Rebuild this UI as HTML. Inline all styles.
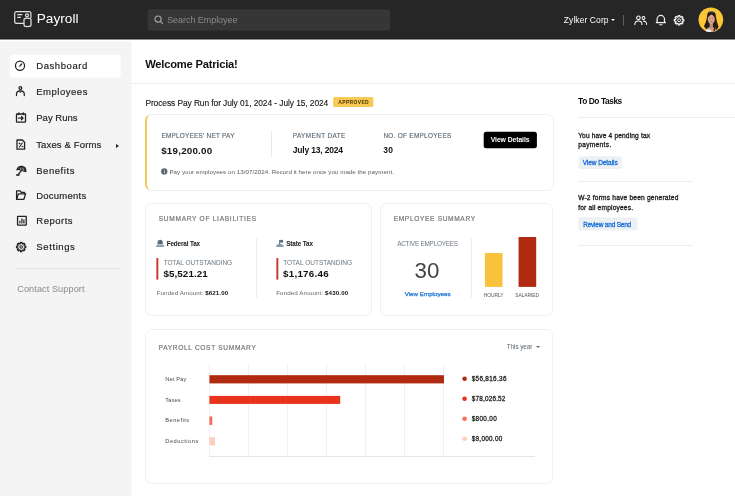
<!DOCTYPE html>
<html><head><meta charset="utf-8"><style>
*{box-sizing:border-box;margin:0;padding:0}
html,body{width:735px;height:496px;overflow:hidden;background:#fff;font-family:"Liberation Sans",sans-serif;color:#111}
.abs{position:absolute}
#top{position:absolute;left:0;top:0;width:735px;height:40px;background:linear-gradient(#262626 0,#262626 38px,#222 38px,#222 39px,#8e8e8e 39px,#8e8e8e 40px)}
#side{position:absolute;left:0;top:41px;width:132px;height:455px;background:linear-gradient(90deg,#f4f4f4 0,#f4f4f4 131px,#f9f9f9 131px);border-top:1px solid #f8f8f8}
.t{position:absolute;white-space:nowrap;line-height:1}
.card{position:absolute;border:1px solid #eff0f1;border-radius:6.5px;background:transparent}
.ln{position:absolute;background:#ececec}
</style></head><body>
<div id="top"></div>
<div id="side"></div>
<svg class="abs" style="left:0;top:0" width="735" height="496" viewBox="0 0 735 496"><rect x="209.0" y="363.4" width="1" height="92.6" fill="#f1f1f3"/><rect x="248.0" y="363.4" width="1" height="92.6" fill="#f1f1f3"/><rect x="287.0" y="363.4" width="1" height="92.6" fill="#f1f1f3"/><rect x="326.0" y="363.4" width="1" height="92.6" fill="#f1f1f3"/><rect x="365.0" y="363.4" width="1" height="92.6" fill="#f1f1f3"/><rect x="404.0" y="363.4" width="1" height="92.6" fill="#f1f1f3"/><rect x="443.0" y="363.4" width="1" height="92.6" fill="#f1f1f3"/><rect x="147.8" y="9.2" width="242.6" height="21.2" fill="#363636" rx="3"/><rect x="623" y="15" width="1" height="10.5" fill="#5e5e5e"/><rect x="9.7" y="54.8" width="111.1" height="22.6" fill="#fff" rx="3"/><rect x="16" y="268.2" width="104.6" height="1" fill="#e1e6e8"/><rect x="333.2" y="96.9" width="40.1" height="10.2" fill="#f9c955" rx="1.5"/><rect x="483.7" y="131.7" width="53.2" height="16.6" fill="#000" rx="2.5"/><rect x="156.4" y="258" width="1.9" height="21.6" fill="#c5382a"/><rect x="276.4" y="258" width="1.9" height="21.6" fill="#c5382a"/><rect x="484.9" y="253" width="17.6" height="33.9" fill="#f9c23c"/><rect x="518.55" y="237" width="17.65" height="49.9" fill="#b02a12"/><rect x="209.4" y="375.2" width="234.6" height="8.2" fill="#b02a12"/><rect x="209.4" y="395.9" width="130.8" height="8" fill="#e8341c"/><rect x="209.4" y="416.4" width="2.9" height="8.5" fill="#fb6b5a"/><rect x="209.4" y="437.2" width="5.7" height="8.2" fill="#fdcfbb"/><rect x="578.4" y="156.2" width="43.9" height="12.7" fill="#eef1f4" rx="2"/><rect x="578.4" y="217.3" width="59" height="13.1" fill="#eef1f4" rx="2"/><circle cx="464.6" cy="378.8" r="2.3" fill="#b02a12"/><circle cx="464.6" cy="398.8" r="2.3" fill="#e8341c"/><circle cx="464.6" cy="418.8" r="2.3" fill="#fb6b5a"/><circle cx="464.6" cy="438.8" r="2.3" fill="#fccdb8"/></svg>

<!-- top bar -->
<svg class="abs" style="left:13.400px;top:10px" width="20" height="18" viewBox="0 0 20 18" fill="none" stroke="#e4e4e4" stroke-width="1.200" stroke-linecap="round" stroke-linejoin="round">
  <path d="M10.4 13.4H3.4a1.7 1.7 0 0 1-1.7-1.700V3.400a1.700 1.700 0 0 1 1.700-1.700h12.800a1.700 1.700 0 0 1 1.700 1.700v4"/>
  <path d="M4.800 4.700h4M4.800 7.300h2.600"/>
  <circle cx="14" cy="5.300" r="1.500"/>
  <path d="M11 9.600c0-1 1.200-1.500 3.400-1.500s3.600.5 3.600 1.500v5.400c0 1-1.400 1.600-3.500 1.600s-3.500-.6-3.500-1.600z"/>
</svg>
<svg class="abs" style="left:153.900px;top:14.700px" width="9.400" height="9.400" viewBox="0 0 10 10" fill="none" stroke="#ababab" stroke-width="1.200" stroke-linecap="round"><circle cx="4.300" cy="4.300" r="3.300"/><path d="M6.800 6.800L9 9"/></svg>
<div class="abs" style="left:610.700px;top:19.200px;width:0;height:0;border-left:2px solid transparent;border-right:2px solid transparent;border-top:2.500px solid #fff"></div>
<svg class="abs" style="left:633.600px;top:14.600px" width="13.400" height="10.800" viewBox="0 0 14 11" fill="none" stroke="#fff" stroke-width="1.100" stroke-linecap="round" stroke-linejoin="round">
  <circle cx="4.600" cy="2.800" r="1.900"/><path d="M.8 10.200c0-2.500 1.500-4 3.800-4s3.800 1.500 3.800 4"/>
  <circle cx="9.900" cy="3" r="1.500"/><path d="M9.700 6.300c2.200-.3 3.600 1.300 3.600 3.900"/>
</svg>
<svg class="abs" style="left:654px;top:13px" width="14" height="14" viewBox="654 13 14 14" fill="none" stroke="#f2f2f2" stroke-width="1.250" stroke-linecap="round" stroke-linejoin="round"><path d="M657.100 22.400v-3.200a3.700 3.700 0 0 1 7.400 0v3.200"/><path d="M656.300 22.600h9.200" stroke-width="1.250"/><path d="M659.600 24.700h2.400" stroke-width="1.100"/></svg>
<svg class="abs" style="left:672px;top:13px" width="15" height="15" viewBox="672 13 15 15" fill="none" stroke="#f2f2f2" stroke-linejoin="round"><path d="M678.19 16.80L678.27 15.56L679.83 15.56L679.91 16.80L680.88 17.21L681.81 16.39L682.91 17.49L682.09 18.42L682.50 19.39L683.74 19.47L683.74 21.03L682.50 21.11L682.09 22.08L682.91 23.01L681.81 24.11L680.88 23.29L679.91 23.70L679.83 24.94L678.27 24.94L678.19 23.70L677.22 23.29L676.29 24.11L675.19 23.01L676.01 22.08L675.60 21.11L674.36 21.03L674.36 19.47L675.60 19.39L676.01 18.42L675.19 17.49L676.29 16.39L677.22 17.21z" stroke-width="1.250"/><circle cx="679.05" cy="20.25" r="1.450" stroke-width=".95"/></svg>
<svg class="abs" style="left:698px;top:6px" width="27" height="28" viewBox="698 6 27 28">
  <defs><clipPath id="avc"><circle cx="710.85" cy="19.75" r="12.35"/></clipPath></defs>
  <circle cx="710.85" cy="19.75" r="12.35" fill="#fbc533"/>
  <g clip-path="url(#avc)">
    <path d="M707.200 15.300c.2-2.800 1.900-4.200 4.200-4.200s4.100 1.400 4.400 4.200c.3 3 .8 5.200 1.500 7.500.4 1.400.8 2.600 1.300 4l-2.500 4.500-3 2h-4l-4-5.500-1.200-1.500c.8-1.600 1.500-3 2-4.600.700-2.200 1.100-4.000 1.300-6.400z" fill="#2a1b18"/>
    <path d="M705.500 33c0-3.600 1.600-5.400 3.600-5.800l4.400-.2c2.200.5 3.600 2.400 3.800 6z" fill="#cf9d84"/>
    <path d="M704.600 33c.2-2.400 1.300-3.500 3-3.700 1.400.5 2.600.6 3.700.2l-.3 3.500z" fill="#e9e9ec"/>
    <path d="M709.600 22.500h3.300v5c-.6.900-2.700.9-3.300 0z" fill="#c08d73"/>
    <ellipse cx="711.250" cy="19.100" rx="3.550" ry="4.900" fill="#d6a68c"/>
    <path d="M707.600 17.500c.2-3 1.600-4.500 3.700-4.500s3.400 1.500 3.600 4.500c-1-1.500-2-2.300-3.300-3.300-1.400 1-2.800 1.800-4 3.300z" fill="#2a1b18"/>
    <path d="M714.300 22c.9 2 1.300 4.500 1.100 7.500l-1.900 3c.5-3 .3-5.800-.2-8z" fill="#2a1b18"/>
    <path d="M708.800 12.300c.8-.9 4.400-.9 5.400 0" stroke="#8595a0" stroke-width="1" fill="none"/>
    <path d="M709.200 18.200h1.400M712 18.200h1.400" stroke="#6b4a3c" stroke-width=".5"/>
    <path d="M710.300 21.700h2" stroke="#a85548" stroke-width=".6"/>
  </g>
</svg>
<!-- sidebar -->
<svg class="abs" style="left:13px;top:59px" width="14" height="14" viewBox="13 59 14 14" fill="none" stroke="#222" stroke-width="1.25" stroke-linecap="round" stroke-linejoin="round"><circle cx="20" cy="65.75" r="4.55"/><path d="M19.7 66.1L21.7 64" stroke-width="1.35"/></svg>
<svg class="abs" style="left:13px;top:85px" width="14" height="13" viewBox="13 85 14 13" fill="none" stroke="#222" stroke-width="1.25" stroke-linecap="round" stroke-linejoin="round"><circle cx="20.4" cy="88.1" r="1.4"/><path d="M16.5 95.6v-1.3c0-2.2 1.500-3.400 3.900-3.400s3.900 1.200 3.900 3.400v1.300"/><path d="M19.500 91.300l.9 1.300.9-1.300" stroke-width=".9"/></svg>
<svg class="abs" style="left:14px;top:111px" width="14" height="13" viewBox="14 111 14 13" fill="none" stroke="#222" stroke-width="1.3" stroke-linecap="round" stroke-linejoin="round"><rect x="16.500" y="114" width="9" height="8.200" rx=".5"/><path d="M18.900 112.900v1.600M23.300 112.900v1.600" stroke-width="1.400"/><path d="M18.600 118.100h4.300M21.500 116.500l1.600 1.600-1.600 1.600" stroke-width="1.300"/></svg>
<svg class="abs" style="left:14px;top:138px" width="14" height="13" viewBox="14 138 14 13" fill="none" stroke="#222" stroke-width="1.3" stroke-linecap="round" stroke-linejoin="round"><path d="M17 140h5.400l2.200 2.200v7H17z"/><path d="M19.300 147l3-4" stroke-width="1.100"/><circle cx="19.400" cy="143.400" r=".55" fill="#222" stroke-width=".5"/><circle cx="22.300" cy="146.500" r=".55" fill="#222" stroke-width=".5"/></svg>
<svg class="abs" style="left:14px;top:164px" width="14" height="13" viewBox="14 164 14 13" fill="none" stroke="#222" stroke-linecap="round" stroke-linejoin="round"><path d="M17 169.900c.2-2.300 2.300-3.900 4.900-3.500 2.600.4 4.200 2.600 3.900 5.300-.6-.7-1.500-.8-2.200-.3-.4-.8-1.300-1.200-2.200-.9-.5-.8-1.400-1.100-2.200-.8-.600-.400-1.500-.400-2.200.200z" stroke-width="1.200" fill="#3a3a3a"/><path d="M20.100 168l1.100 2.500M22.900 168.200l.5 3.100" stroke="#eee" stroke-width=".55"/><path d="M21.300 170.600l-3.300 4.300" stroke-width="1.350"/><path d="M16.500 175h2.600" stroke-width="1.300"/></svg>
<svg class="abs" style="left:14px;top:188px" width="14" height="13" viewBox="14 188 14 13" fill="none" stroke="#222" stroke-width="1.3" stroke-linecap="round" stroke-linejoin="round"><path d="M16.600 199.300v-8.400h3.600l1 1.500h3.300v1.300"/><path d="M16.600 199.300l1.800-5.400h7.200l-1.700 5.400z"/></svg>
<svg class="abs" style="left:15px;top:214px" width="14" height="13" viewBox="15 214 14 13" fill="none" stroke="#222" stroke-width="1.3" stroke-linecap="round" stroke-linejoin="round"><rect x="17.550" y="216.350" width="8.700" height="8.700" rx=".4"/><path d="M19.900 223v-1.800M21.900 223v-4.200M23.900 223v-3.200" stroke-width="1.200"/></svg>
<svg class="abs" style="left:14px;top:240px" width="15" height="15" viewBox="14 240 15 15" fill="none" stroke="#222" stroke-linejoin="round"><path d="M20.32 243.60L20.39 242.36L21.91 242.36L21.98 243.60L22.93 243.99L23.85 243.17L24.93 244.25L24.11 245.17L24.50 246.12L25.74 246.19L25.74 247.71L24.50 247.78L24.11 248.73L24.93 249.65L23.85 250.73L22.93 249.91L21.98 250.30L21.91 251.54L20.39 251.54L20.32 250.30L19.37 249.91L18.45 250.73L17.37 249.65L18.19 248.73L17.80 247.78L16.56 247.71L16.56 246.19L17.80 246.12L18.19 245.17L17.37 244.25L18.45 243.17L19.37 243.99z" stroke-width="1.300"/><circle cx="21.15" cy="246.95" r="1.300" stroke-width="1.050"/></svg>
<div class="abs" style="left:115.600px;top:143.500px;width:0;height:0;border-top:2px solid transparent;border-bottom:2px solid transparent;border-left:3.400px solid #222"></div>

<!-- main -->
<div class="ln" style="left:131.700px;top:82.800px;width:604px;height:1px;background:#ededed"></div>

<div class="card" style="left:145px;top:114px;width:408.500px;height:77px;border-left:2.200px solid #f5c95a"></div>
<div class="ln" style="left:271px;top:130.600px;width:1px;height:26.800px;background:#e8e8e8"></div>
<svg class="abs" style="left:160px;top:167px" width="9" height="9" viewBox="160 167 9 9"><circle cx="164.250" cy="171.450" r="3.150" fill="#5a6673"/><rect x="163.900" y="169.700" width=".7" height=".8" fill="#fff"/><rect x="163.900" y="171" width=".7" height="2.100" fill="#fff"/></svg>

<div class="card" style="left:145px;top:203px;width:227px;height:112.500px"></div>
<div class="ln" style="left:256px;top:238px;width:1px;height:59.500px"></div>
<!-- federal icon -->
<svg class="abs" style="left:155px;top:239px" width="11" height="9" viewBox="155 239 11 9"><path d="M157.500 244.300v-1.700a2.650 2.900 0 0 1 5.300 0v1.700z" fill="#56697a"/><path d="M158.600 242.600a1.600 1.800 0 0 1 1.400-1.700" stroke="#8397a8" stroke-width=".6" fill="none"/><rect x="157.200" y="244.300" width="5.900" height=".9" fill="#a9b8c4"/><rect x="156.100" y="245.300" width="8" height="1.500" fill="#6f899c"/></svg>
<!-- state icon -->
<svg class="abs" style="left:275px;top:239px" width="11" height="9" viewBox="275 239 11 9"><path d="M276.400 246.800c0-1.900 1.300-3.100 3.500-3.100s3.500 1.200 3.500 3.100z" fill="#8fa4b4"/><rect x="276.300" y="245.700" width="7.200" height="1.100" fill="#7b93a5"/><rect x="279.200" y="239.900" width=".9" height="4.600" fill="#56697a"/><path d="M279.600 239.900h3.500v2.700h-3.500z" fill="#5d7183"/></svg>

<div class="card" style="left:379.500px;top:203px;width:173.500px;height:112.500px"></div>
<div class="ln" style="left:471px;top:238px;width:1px;height:59.500px"></div>

<div class="card" style="left:145px;top:329px;width:408px;height:155px"></div>
<div class="abs" style="left:535.800px;top:345.800px;width:0;height:0;border-left:2.100px solid transparent;border-right:2.100px solid transparent;border-top:2.400px solid #5a6673"></div>

<div class="ln" style="left:209px;top:455.500px;width:326.300px;height:1px;background:#e6e6e6"></div>

<!-- todo -->
<div class="ln" style="left:578px;top:116.700px;width:157px;height:1px;background:#ededed"></div>
<div class="ln" style="left:578px;top:180.900px;width:115px;height:1px;background:#ededed"></div>
<div class="ln" style="left:578px;top:244.700px;width:115px;height:1px;background:#ededed"></div>

<div id="txt" style="position:absolute;left:0;top:0;width:735px;height:496px;will-change:transform"><div class="t" style="left:36.72px;top:12px;font-size:13.6px;font-weight:normal;color:#fff;letter-spacing:0.032px">Payroll</div>
<div class="t" style="left:167.15px;top:16px;font-size:9px;font-weight:normal;color:#8a8a8a;letter-spacing:-0.051px">Search Employee</div>
<div class="t" style="left:563.78px;top:16px;font-size:8.5px;font-weight:normal;color:#fff;letter-spacing:0.086px">Zylker Corp</div>
<div class="t" style="left:36.23px;top:61px;font-size:9.5px;font-weight:normal;color:#222;letter-spacing:0.585px;-webkit-text-stroke:.17px #222">Dashboard</div>
<div class="t" style="left:36.23px;top:87px;font-size:9.5px;font-weight:normal;color:#222;letter-spacing:0.521px;-webkit-text-stroke:.17px #222">Employees</div>
<div class="t" style="left:36.23px;top:113px;font-size:9.5px;font-weight:normal;color:#222;letter-spacing:0.025px;-webkit-text-stroke:.17px #222">Pay Runs</div>
<div class="t" style="left:36.23px;top:140px;font-size:9.5px;font-weight:normal;color:#222;letter-spacing:0.142px;-webkit-text-stroke:.17px #222">Taxes &amp; Forms</div>
<div class="t" style="left:36.23px;top:166px;font-size:9.5px;font-weight:normal;color:#222;letter-spacing:0.548px;-webkit-text-stroke:.17px #222">Benefits</div>
<div class="t" style="left:36.23px;top:191px;font-size:9.5px;font-weight:normal;color:#222;letter-spacing:0.238px;-webkit-text-stroke:.17px #222">Documents</div>
<div class="t" style="left:36.32px;top:216px;font-size:9.5px;font-weight:normal;color:#222;letter-spacing:0.500px;-webkit-text-stroke:.17px #222">Reports</div>
<div class="t" style="left:36.32px;top:242px;font-size:9.5px;font-weight:normal;color:#222;letter-spacing:0.605px;-webkit-text-stroke:.17px #222">Settings</div>
<div class="t" style="left:17.24px;top:285px;font-size:9.2px;font-weight:normal;color:#8a8a8a;letter-spacing:0.060px">Contact Support</div>
<div class="t" style="left:145.24px;top:59px;font-size:11.2px;font-weight:bold;color:#111;letter-spacing:-0.224px">Welcome Patricia!</div>
<div class="t" style="left:145.38px;top:99px;font-size:8.4px;font-weight:normal;color:#111;letter-spacing:-0.069px;-webkit-text-stroke:.1px #111">Process Pay Run for July 01, 2024 - July 15, 2024</div>
<div class="t" style="left:338.35px;top:100px;font-size:5px;font-weight:bold;color:#4a3800;letter-spacing:0.327px">APPROVED</div>
<div class="t" style="left:161.38px;top:133px;font-size:6.4px;font-weight:normal;color:#5f6b76;letter-spacing:0.256px;-webkit-text-stroke:.15px #5f6b76">EMPLOYEES' NET PAY</div>
<div class="t" style="left:161.21px;top:146px;font-size:9.8px;font-weight:bold;color:#111;letter-spacing:0.215px">$19,200.00</div>
<div class="t" style="left:292.78px;top:133px;font-size:6.4px;font-weight:normal;color:#5f6b76;letter-spacing:0.389px;-webkit-text-stroke:.15px #5f6b76">PAYMENT DATE</div>
<div class="t" style="left:292.68px;top:146px;font-size:8.5px;font-weight:bold;color:#111;letter-spacing:-0.173px">July 13, 2024</div>
<div class="t" style="left:383.38px;top:133px;font-size:6.4px;font-weight:normal;color:#5f6b76;letter-spacing:0.309px;-webkit-text-stroke:.15px #5f6b76">NO. OF EMPLOYEES</div>
<div class="t" style="left:383.27px;top:146px;font-size:8.5px;font-weight:bold;color:#111;letter-spacing:0.231px">30</div>
<div class="t" style="left:490.76px;top:137px;font-size:6.8px;font-weight:bold;color:#fff;letter-spacing:-0.070px">View Details</div>
<div class="t" style="left:169.39px;top:169px;font-size:6.2px;font-weight:normal;color:#5c5c5c;letter-spacing:0.045px">Pay your employees on 13/07/2024. Record it here once you made the payment.</div>
<div class="t" style="left:158.67px;top:216px;font-size:6.6px;font-weight:normal;color:#777;letter-spacing:0.709px;-webkit-text-stroke:.2px #777">SUMMARY OF LIABILITIES</div>
<div class="t" style="left:166.68px;top:241px;font-size:6.4px;font-weight:bold;color:#161616;letter-spacing:-0.160px">Federal Tax</div>
<div class="t" style="left:286.18px;top:241px;font-size:6.4px;font-weight:bold;color:#161616;letter-spacing:-0.126px">State Tax</div>
<div class="t" style="left:163.68px;top:260px;font-size:6.5px;font-weight:normal;color:#6b7780;letter-spacing:-0.018px">TOTAL OUTSTANDING</div>
<div class="t" style="left:283.18px;top:260px;font-size:6.5px;font-weight:normal;color:#6b7780;letter-spacing:0.013px">TOTAL OUTSTANDING</div>
<div class="t" style="left:163.51px;top:269px;font-size:9.8px;font-weight:bold;color:#111;letter-spacing:0.074px">$5,521.21</div>
<div class="t" style="left:283.01px;top:269px;font-size:9.8px;font-weight:bold;color:#111;letter-spacing:0.262px">$1,176.46</div>
<div class="t" style="left:156.69px;top:290px;font-size:6.2px;font-weight:normal;color:#666;letter-spacing:0.092px">Funded Amount: <b style="color:#111">$621.00</b></div>
<div class="t" style="left:276.19px;top:290px;font-size:6.2px;font-weight:normal;color:#666;letter-spacing:0.116px">Funded Amount: <b style="color:#111">$430.00</b></div>
<div class="t" style="left:393.67px;top:216px;font-size:6.6px;font-weight:normal;color:#777;letter-spacing:0.651px;-webkit-text-stroke:.2px #777">EMPLOYEE SUMMARY</div>
<div class="t" style="left:397.18px;top:241px;font-size:6.4px;font-weight:normal;color:#6b7780;letter-spacing:-0.222px">ACTIVE EMPLOYEES</div>
<div class="t" style="left:414.38px;top:260px;font-size:22.3px;font-weight:normal;color:#444;letter-spacing:0.188px">30</div>
<div class="t" style="left:404.69px;top:291px;font-size:6.2px;font-weight:normal;color:#1a73d8;letter-spacing:0.023px;-webkit-text-stroke:.25px #1a73d8">View Employees</div>
<div class="t" style="left:483.75px;top:294px;font-size:4.9px;font-weight:normal;color:#555;letter-spacing:-0.038px">HOURLY</div>
<div class="t" style="left:515.25px;top:294px;font-size:4.9px;font-weight:normal;color:#555;letter-spacing:-0.051px">SALARIED</div>
<div class="t" style="left:158.57px;top:345px;font-size:6.6px;font-weight:normal;color:#777;letter-spacing:0.664px;-webkit-text-stroke:.2px #777">PAYROLL COST SUMMARY</div>
<div class="t" style="left:506.78px;top:344px;font-size:6.4px;font-weight:normal;color:#5a6673;letter-spacing:-0.079px">This year</div>
<div class="t" style="left:165.31px;top:377px;font-size:5.7px;font-weight:normal;color:#484848;letter-spacing:0.144px">Net Pay</div>
<div class="t" style="left:165.31px;top:398px;font-size:5.7px;font-weight:normal;color:#484848;letter-spacing:0.135px">Taxes</div>
<div class="t" style="left:165.31px;top:418px;font-size:5.7px;font-weight:normal;color:#484848;letter-spacing:0.477px">Benefits</div>
<div class="t" style="left:165.31px;top:439px;font-size:5.7px;font-weight:normal;color:#484848;letter-spacing:0.503px">Deductions</div>
<div class="t" style="left:471.68px;top:376px;font-size:6.4px;font-weight:normal;color:#222;letter-spacing:0.316px;-webkit-text-stroke:.28px #222">$56,816.36</div>
<div class="t" style="left:471.68px;top:396px;font-size:6.4px;font-weight:normal;color:#222;letter-spacing:0.194px;-webkit-text-stroke:.28px #222">$78,026.52</div>
<div class="t" style="left:471.68px;top:416px;font-size:6.4px;font-weight:normal;color:#222;letter-spacing:0.323px;-webkit-text-stroke:.28px #222">$800.00</div>
<div class="t" style="left:471.68px;top:436px;font-size:6.4px;font-weight:normal;color:#222;letter-spacing:0.276px;-webkit-text-stroke:.28px #222">$9,000.00</div>
<div class="t" style="left:578.08px;top:97px;font-size:8.4px;font-weight:bold;color:#111;letter-spacing:-0.437px">To Do Tasks</div>
<div class="t" style="left:578.17px;top:133px;font-size:6.6px;font-weight:normal;color:#1c1c1c;letter-spacing:0.151px;-webkit-text-stroke:.3px #1c1c1c">You have 4 pending tax</div>
<div class="t" style="left:578.17px;top:142px;font-size:6.6px;font-weight:normal;color:#1c1c1c;letter-spacing:0.330px;-webkit-text-stroke:.3px #1c1c1c">payments.</div>
<div class="t" style="left:582.67px;top:160px;font-size:6.5px;font-weight:normal;color:#1a6fd6;letter-spacing:-0.055px;-webkit-text-stroke:.3px #1a6fd6">View Details</div>
<div class="t" style="left:578.17px;top:195px;font-size:6.6px;font-weight:normal;color:#1c1c1c;letter-spacing:0.204px;-webkit-text-stroke:.3px #1c1c1c">W-2 forms have been generated</div>
<div class="t" style="left:578.17px;top:205px;font-size:6.6px;font-weight:normal;color:#1c1c1c;letter-spacing:0.187px;-webkit-text-stroke:.3px #1c1c1c">for all employees.</div>
<div class="t" style="left:583.17px;top:222px;font-size:6.5px;font-weight:normal;color:#1a6fd6;letter-spacing:-0.207px;-webkit-text-stroke:.3px #1a6fd6">Review and Send</div></div>
</body></html>
